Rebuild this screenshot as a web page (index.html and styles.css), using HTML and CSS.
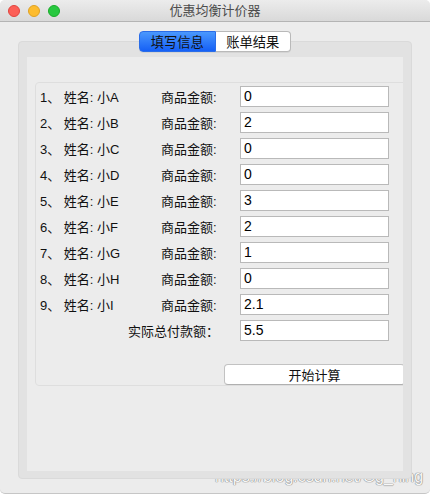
FILE: index.html
```html
<!DOCTYPE html>
<html lang="zh-CN">
<head>
<meta charset="utf-8">
<title>优惠均衡计价器</title>
<link rel="stylesheet" href="styles.css">
</head>
<body>
<div class="window">
  <div class="titlebar">
    <div class="lights">
      <span class="light red"></span>
      <span class="light yellow"></span>
      <span class="light green"></span>
    </div>
    <div class="title">优惠均衡计价器</div>
  </div>
  <div class="body">
    <div class="tabs">
      <div class="tab active">填写信息</div>
      <div class="tab">账单结果</div>
    </div>
    <div class="frame">
      <div class="pane">
        <div class="group">
          <div class="form">
            <div class="name">1、 姓名: 小A</div><div class="lbl">商品金额:</div><div class="field">0</div>
            <div class="name">2、 姓名: 小B</div><div class="lbl">商品金额:</div><div class="field">2</div>
            <div class="name">3、 姓名: 小C</div><div class="lbl">商品金额:</div><div class="field">0</div>
            <div class="name">4、 姓名: 小D</div><div class="lbl">商品金额:</div><div class="field">0</div>
            <div class="name">5、 姓名: 小E</div><div class="lbl">商品金额:</div><div class="field">3</div>
            <div class="name">6、 姓名: 小F</div><div class="lbl">商品金额:</div><div class="field">2</div>
            <div class="name">7、 姓名: 小G</div><div class="lbl">商品金额:</div><div class="field">1</div>
            <div class="name">8、 姓名: 小H</div><div class="lbl">商品金额:</div><div class="field">0</div>
            <div class="name">9、 姓名: 小I</div><div class="lbl">商品金额:</div><div class="field">2.1</div>
            <div class="total">实际总付款额：</div><div class="field">5.5</div>
          </div>
          <div class="button">开始计算</div>
        </div>
      </div>
    </div>
  </div>
  <div class="watermark">https://blog.csdn.net/Gg_ning</div>
</div>
</body>
</html>
```
FILE: styles.css
```css
html, body {
  margin: 0;
  padding: 0;
  background: #ffffff;
}
body {
  font-family: "Liberation Sans", "Noto Sans CJK SC", sans-serif;
  font-size: 13px;
  color: #111;
}
.window {
  position: relative;
  width: 430px;
  height: 494px;
  box-sizing: border-box;
  background: #ececec;
  border-bottom: 1px solid #c6c6c6;
  border-radius: 5px 5px 5px 5px;
  overflow: hidden;
}
.titlebar {
  position: relative;
  height: 21px;
  border-bottom: 1px solid #b4b4b4;
  background: linear-gradient(#ececec, #d9d9d9);
  display: flex;
  align-items: center;
  justify-content: center;
}
.lights {
  position: absolute;
  left: 8px;
  top: 5px;
  display: flex;
  gap: 8px;
}
.light {
  width: 12px;
  height: 12px;
  border-radius: 50%;
  box-sizing: border-box;
}
.red { background: #fc5f57; border: 1px solid #e0443e; }
.yellow { background: #fdbc2e; border: 1px solid #dea123; }
.green { background: #28c840; border: 1px solid #1aab29; }
.title {
  color: #4d4d4d;
  font-size: 13px;
  line-height: 21px;
}
.body {
  padding-top: 9px;
}
.tabs {
  position: relative;
  z-index: 2;
  display: flex;
  width: 152px;
  height: 21px;
  margin-left: 139px;
}
.tab {
  flex: 1;
  box-sizing: border-box;
  display: flex;
  align-items: center;
  justify-content: center;
  font-size: 13.3px;
  color: #111;
  background: #ffffff;
  border: 1px solid #b9b9b9;
  border-left: none;
  border-radius: 0 4px 4px 0;
  box-shadow: 0 1px 0 rgba(0,0,0,0.06);
}
.tab.active {
  background: linear-gradient(#4a98fd, #1560f6);
  border: 1px solid #2a6de8;
  border-radius: 4px 0 0 4px;
}
.frame {
  position: relative;
  z-index: 1;
  margin-top: -11px;
  margin-left: 18px;
  width: 394px;
  height: 438px;
  box-sizing: border-box;
  background: #e2e2e2;
  border: 1px solid #dadada;
  border-radius: 4px;
  padding: 15px 8px 7px 8px;
}
.pane {
  height: 100%;
  background: #ececec;
  overflow: hidden;
}
.group {
  margin-top: 25px;
  margin-left: 8px;
  margin-right: -10px;
  height: 304px;
  box-sizing: border-box;
  border: 1px solid #dedede;
  border-radius: 4px;
  padding: 3px 0 0 4px;
  overflow: hidden;
}
.form {
  display: grid;
  grid-template-columns: 121px 79px 149px;
  grid-auto-rows: 21px;
  row-gap: 5px;
  align-items: center;
}
.name, .lbl {
  white-space: nowrap;
}
.total {
  grid-column: 1 / 3;
  justify-self: end;
  margin-right: 21px;
  white-space: nowrap;
}
.field {
  height: 21px;
  box-sizing: border-box;
  background: #ffffff;
  border: 1px solid #b9b9b9;
  padding-left: 3px;
  font-size: 14px;
  line-height: 19px;
  color: #000;
}
.button {
  margin-top: 23px;
  margin-left: 184px;
  width: 181px;
  height: 21px;
  box-sizing: border-box;
  background: #ffffff;
  border: 1px solid #c2c2c2;
  border-bottom-color: #b0b0b0;
  border-radius: 4px;
  display: flex;
  align-items: center;
  justify-content: center;
  font-size: 13px;
  color: #111;
}
.watermark {
  position: absolute;
  left: 215px;
  top: 468px;
  font-family: "Liberation Sans", sans-serif;
  font-size: 16px;
  color: #f7f7f7;
  text-shadow: 0 0 1px #888888, 0 0 1px #888888, 0 0 1px #999999;
  white-space: nowrap;
}
```
